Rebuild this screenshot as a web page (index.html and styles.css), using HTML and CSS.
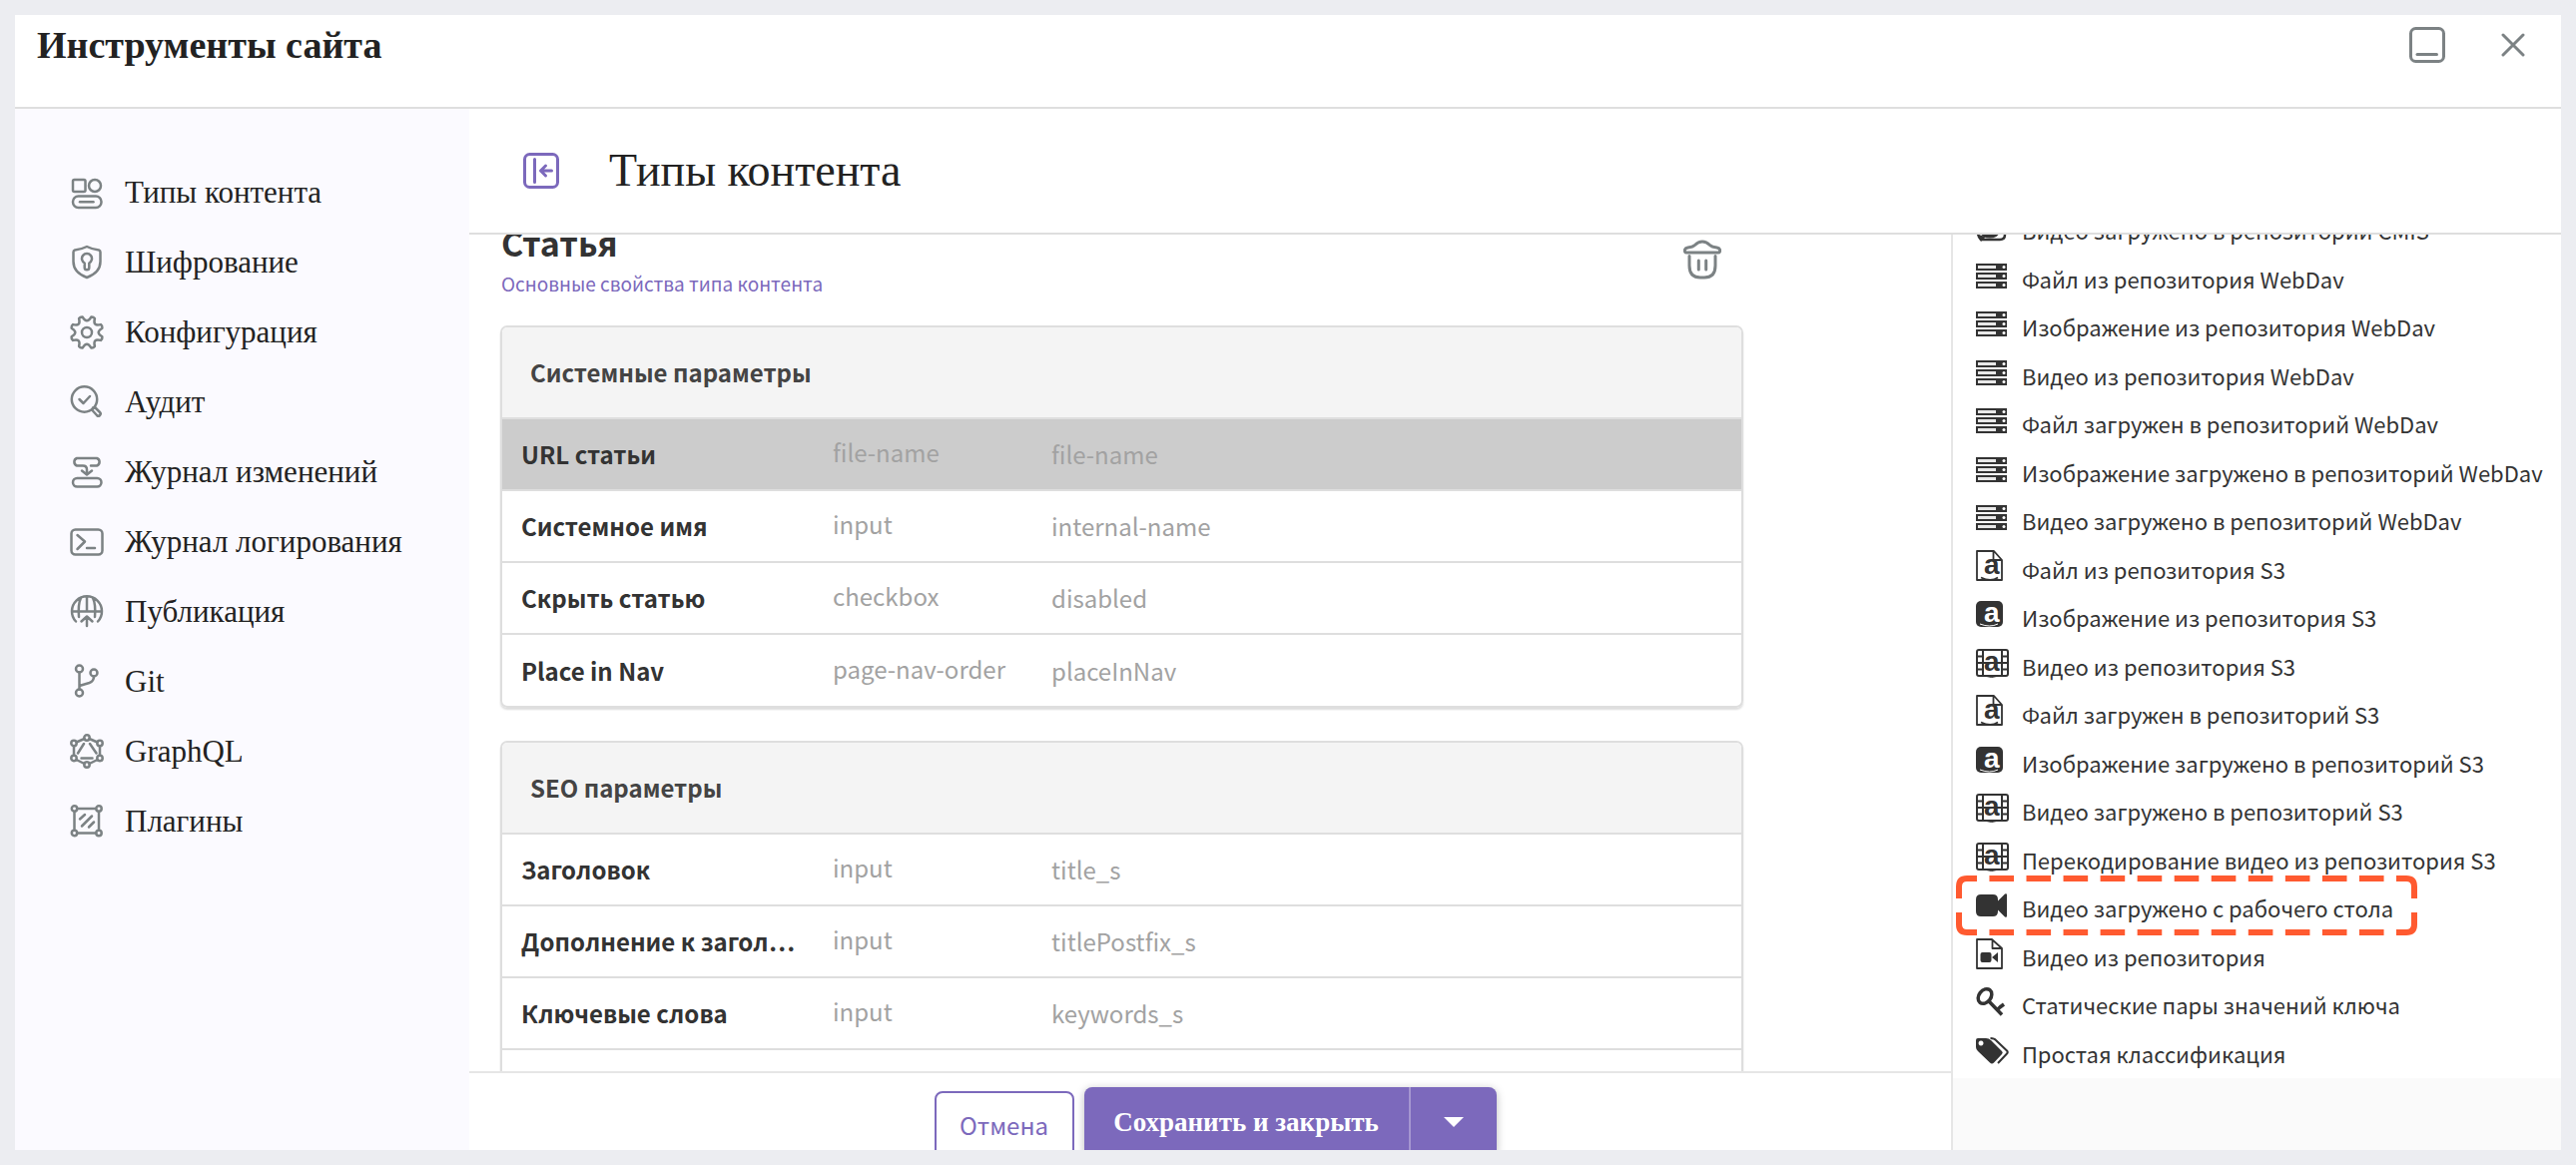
FILE: index.html
```html
<!DOCTYPE html>
<html lang="ru">
<head>
<meta charset="utf-8">
<title>Инструменты сайта</title>
<link rel="stylesheet" href="styles.css">
</head>
<body>
<svg class="sprite" aria-hidden="true">
  <symbol id="i-server" viewBox="0 0 34 32">
    <path fill="#333" d="M0 4h31v7H0zM0 13h31v7H0zM0 22h31v7H0z"/>
    <path fill="#e8e8e8" d="M2 6h18v3H2zM2 15h18v3H2zM2 24h18v3H2z"/>
    <circle fill="#fff" cx="28" cy="7.500" r="1.500"/><circle fill="#fff" cx="28" cy="16.500" r="1.500"/><circle fill="#fff" cx="28" cy="25.500" r="1.500"/>
  </symbol>
  <symbol id="i-cmis" viewBox="0 0 34 32">
    <path fill="none" stroke="#333" stroke-width="2.500" d="M2 8v14q0 4 3 7h19q5 0 5-5V8q0-5-5-5H7q-5 0-5 5z"/>
    <ellipse fill="#333" cx="14" cy="22" rx="9" ry="5.500"/>
    <path fill="#333" d="M2 24l3 7 5-5z"/>
  </symbol>
  <symbol id="i-file-a" viewBox="0 0 34 32">
    <path fill="none" stroke="#333" stroke-width="1.800" stroke-linejoin="round" d="M1 1h17l8 9v20H1zM17.500 1v9H26M5 27.500q10 5 17 0"/>
    <text x="8" y="24" class="logo-a">a</text>
  </symbol>
  <symbol id="i-image-a" viewBox="0 0 34 32">
    <rect fill="#333" y="3" width="27" height="26" rx="5"/>
    <text x="8" y="24" class="logo-a logo-a-light">a</text>
    <path fill="none" stroke="#fff" d="M4 26q10 4 18 0"/>
  </symbol>
  <symbol id="i-film-a" viewBox="0 0 34 32">
    <rect fill="none" stroke="#333" stroke-width="2" x="1" y="3" width="31" height="26" rx="2"/>
    <path fill="none" stroke="#333" stroke-width="2" d="M7 3v26M26 3v26M1 9.500h6M1 16h31M1 22.500h6M26 9.500h6M26 22.500h6"/>
    <path fill="none" stroke="#333" d="M8 29q8 3 15 0"/>
    <text x="8" y="24" class="logo-a">a</text>
  </symbol>
  <symbol id="i-video" viewBox="0 0 34 32">
    <path fill="#333" d="M5 6h12q5 0 5 5v1.500l7-7q2-1 2 1v21q0 2-2 1l-7-7V23q0 5-5 5H5q-5 0-5-5V11q0-5 5-5z"/>
  </symbol>
  <symbol id="i-file-video" viewBox="0 0 34 32">
    <path fill="none" stroke="#333" stroke-width="1.800" stroke-linejoin="round" d="M1 2h15l10 9v20H1zM16.500 2v9H26"/>
    <path fill="#333" d="M6.500 15h7q2 0 2 2v6q0 2-2 2h-7q-2 0-2-2v-6q0-2 2-2zM22 15v10l-6-5z"/>
  </symbol>
  <symbol id="i-key" viewBox="0 0 34 32">
    <ellipse fill="none" stroke="#333" stroke-width="3.500" cx="9" cy="11" rx="6" ry="8" transform="rotate(38 9 11)"/>
    <path fill="none" stroke="#333" stroke-width="3.500" d="M13 16l13 13.500M21 25l4-4M24 22l4-3"/>
  </symbol>
  <symbol id="i-tags" viewBox="0 0 34 32">
    <path fill="#333" fill-rule="evenodd" d="M0 6q0-2 2-2h8q3 0 5 2l11 11q1.500 1.500 0 3l-8 8.500q-2 2-4 0L2 17q-2-2-2-4zM5 6.500a2.500 2.500 0 1 0 .1 0z"/>
    <path fill="none" stroke="#333" stroke-width="2" d="M14.500 4q4 0 6 2.500l10.500 10q1.500 1.500 0 3l-9 9.500"/>
  </symbol>
</svg>

<div class="window">
  <header class="topbar">
    <h1 class="topbar-title">Инструменты сайта</h1>
    <button class="icon-button" type="button" aria-label="Свернуть">
      <svg width="36" height="36" viewBox="0 0 36 36" class="line-icon"><rect x="1.500" y="1.500" width="33" height="33" rx="5" stroke-width="3"/><path stroke-width="3" d="M8 27.500h19.500"/></svg>
    </button>
    <button class="icon-button" type="button" aria-label="Закрыть">
      <svg width="24" height="24" viewBox="0 0 24 24" class="line-icon"><path stroke-width="3" d="M2 2l20 20M22 2L2 22"/></svg>
    </button>
  </header>

  <div class="workspace">
    <nav class="sidebar">
      <a class="nav-item" href="#types"><svg class="line-icon nav-icon" viewBox="0 0 36 36"><rect x="4" y="5" width="12.500" height="12" rx="1.500"/><circle cx="26" cy="11" r="6"/><rect x="4" y="21.500" width="28.500" height="11.500" rx="5.500"/><path d="M11 27.200h13.500"/></svg>Типы контента</a>
      <a class="nav-item" href="#encryption"><svg class="line-icon nav-icon" viewBox="0 0 36 36"><path d="M18 2q6 3 12 3.500 1.500.5 1.500 2V17q0 11-13.500 16Q4.500 28 4.500 17V7.500q0-1.500 1.500-2Q12 5 18 2z"/><path d="M15.700 18.500a5 5 0 1 1 4.600 0V23a2.300 2.300 0 0 1-4.600 0z"/></svg>Шифрование</a>
      <a class="nav-item" href="#config"><svg class="line-icon nav-icon" viewBox="0 0 36 36"><circle cx="18" cy="18" r="5"/><path d="M13.700 2.600C16.700 7.600 19.300 7.600 22.300 2.600Q24.500 2.300 25.900 4.100C24.500 9.700 26.300 11.500 31.900 10.100Q33.700 11.500 33.400 13.700C28.400 16.700 28.400 19.300 33.400 22.300Q33.700 24.500 31.900 25.900C26.300 24.500 24.500 26.300 25.900 31.900Q24.500 33.700 22.300 33.400C19.300 28.400 16.700 28.400 13.700 33.400Q11.500 33.700 10.100 31.900C11.500 26.300 9.700 24.500 4.100 25.900Q2.300 24.500 2.600 22.300C7.600 19.300 7.600 16.700 2.600 13.700Q2.300 11.500 4.100 10.100C9.700 11.500 11.500 9.700 10.100 4.100Q11.500 2.300 13.700 2.600z"/></svg>Конфигурация</a>
      <a class="nav-item" href="#audit"><svg class="line-icon nav-icon" viewBox="0 0 36 36"><circle cx="15.500" cy="15" r="12.700"/><path d="M10.500 15l4 4 6.500-7M23 25.500q1-2 3-2.500l5 5q1.500 1.500 0 3t-3 0zM24.500 24l-.5-.5"/></svg>Аудит</a>
      <a class="nav-item" href="#changes"><svg class="line-icon nav-icon" viewBox="0 0 36 36"><path d="M14 11.500H8A4 4 0 0 1 8 4h20a4 4 0 0 1 0 7.500h-6M14 11.500q4 0 4 4v4M13 16.500l5 4 5-4"/><rect x="4" y="24" width="28.500" height="8.500" rx="4.200"/></svg>Журнал изменений</a>
      <a class="nav-item" href="#logging"><svg class="line-icon nav-icon" viewBox="0 0 36 36"><rect x="2.500" y="5.500" width="31" height="25" rx="4"/><path d="M8.500 11l7.500 6.500L8.500 25M18 24h8"/></svg>Журнал логирования</a>
      <a class="nav-item" href="#publishing"><svg class="line-icon nav-icon" viewBox="0 0 36 36"><path d="M7 27.500a15 15 0 1 1 22 0M3 17.500h30M18 3v14.500M12 4Q9 10 10 23M24 4q3 6 2 19M18 32V23M12.500 27.500L18 22.500l5.500 5"/></svg>Публикация</a>
      <a class="nav-item" href="#git"><svg class="line-icon nav-icon" viewBox="0 0 36 36"><circle cx="10.500" cy="5" r="3.500"/><circle cx="25" cy="9" r="3.500"/><circle cx="10.500" cy="29" r="3.500"/><path d="M10.500 8.500v17M25 12.500q0 5-4.500 6.500l-10 3"/></svg>Git</a>
      <a class="nav-item" href="#graphql"><svg class="line-icon nav-icon" viewBox="0 0 36 36"><circle cx="18" cy="4" r="2.700"/><circle cx="18" cy="31" r="2.700"/><circle cx="5" cy="9.500" r="2.700"/><circle cx="31" cy="9.500" r="2.700"/><circle cx="5" cy="24.500" r="2.700"/><circle cx="31" cy="24.500" r="2.700"/><path d="M7.500 8.500L15.500 5M20.500 5l8 3.500M31 12.200v9.600M5 12.200v9.600M7.500 26l8 4M28.500 26l-8 4M15 10L9 19.500M21 10l6.500 9.500M12.500 24.500h11"/></svg>GraphQL</a>
      <a class="nav-item" href="#plugins"><svg class="line-icon nav-icon" viewBox="0 0 36 36"><circle cx="5.500" cy="5" r="2.700"/><circle cx="30" cy="5" r="2.700"/><circle cx="5.500" cy="29.500" r="2.700"/><circle cx="30" cy="29.500" r="2.700"/><path d="M8.500 5h18.500M8.500 29.500h18.500M5.500 8v18.500M30 8v18.500M11 15.500L16 11M13 22.500L23 12.500M20 23.500l5-5"/></svg>Плагины</a>
    </nav>

    <main class="main">
      <header class="main-header">
        <button class="icon-button" type="button" aria-label="Скрыть меню">
          <svg width="36" height="36" viewBox="0 0 36 36" class="line-icon accent-icon"><rect x="1.500" y="1.500" width="33" height="33" rx="5" stroke-width="3"/><path stroke-width="3" d="M11.500 6.500v23M17.500 18h11M22.500 13l-5 5 5 5"/></svg>
        </button>
        <h2 class="main-title">Типы контента</h2>
      </header>

      <div class="main-body">
        <div class="editor">
          <div class="form-area">
            <div class="type-head">
              <div>
                <h3 class="type-name">Статья</h3>
                <a class="type-link" href="#properties">Основные свойства типа контента</a>
              </div>
              <button class="icon-button" type="button" aria-label="Удалить">
                <svg width="38" height="40" viewBox="0 0 38 40" class="line-icon"><path stroke-width="3" d="M3 13q-2 0-1.500-3 .5-1.500 3-2 5-.5 7-2.500Q15 2 19 2t7.500 3.500q2 2 7 2.500 2.500.5 3 2 .5 3-1.500 3zM6 16.500V26q0 12 11 12h4q11 0 11-12v-9.500M15.300 21v9M22.700 21v9"/></svg>
              </button>
            </div>

            <section class="card">
              <h4 class="card-title">Системные параметры</h4>
              <table class="fields">
                <tr class="selected"><th scope="row">URL статьи</th><td class="kind">file-name</td><td>file-name</td></tr>
                <tr><th scope="row">Системное имя</th><td class="kind">input</td><td>internal-name</td></tr>
                <tr><th scope="row">Скрыть статью</th><td class="kind">checkbox</td><td>disabled</td></tr>
                <tr><th scope="row">Place in Nav</th><td class="kind">page-nav-order</td><td>placeInNav</td></tr>
              </table>
            </section>

            <section class="card">
              <h4 class="card-title">SEO параметры</h4>
              <table class="fields">
                <tr><th scope="row">Заголовок</th><td class="kind">input</td><td>title_s</td></tr>
                <tr><th scope="row">Дополнение к загол…</th><td class="kind">input</td><td>titlePostfix_s</td></tr>
                <tr><th scope="row">Ключевые слова</th><td class="kind">input</td><td>keywords_s</td></tr>
                <tr><th scope="row"></th><td class="kind"></td><td></td></tr>
              </table>
            </section>
          </div>

          <footer class="actions">
            <button class="cancel" type="button">Отмена</button>
            <div class="save-group">
              <button class="save" type="button">Сохранить и закрыть</button>
              <button class="save-more" type="button" aria-label="Другие варианты"><svg width="20" height="10" viewBox="0 0 20 10"><path fill="#fff" d="M0 0h20L10 10z"/></svg></button>
            </div>
          </footer>
        </div>

        <aside class="palette">
          <ul class="sources">
            <li><svg class="source-icon"><use href="#i-cmis"/></svg>Видео загружено в репозиторий CMIS</li>
            <li><svg class="source-icon"><use href="#i-server"/></svg>Файл из репозитория WebDav</li>
            <li><svg class="source-icon"><use href="#i-server"/></svg>Изображение из репозитория WebDav</li>
            <li><svg class="source-icon"><use href="#i-server"/></svg>Видео из репозитория WebDav</li>
            <li><svg class="source-icon"><use href="#i-server"/></svg>Файл загружен в репозиторий WebDav</li>
            <li><svg class="source-icon"><use href="#i-server"/></svg>Изображение загружено в репозиторий WebDav</li>
            <li><svg class="source-icon"><use href="#i-server"/></svg>Видео загружено в репозиторий WebDav</li>
            <li><svg class="source-icon"><use href="#i-file-a"/></svg>Файл из репозитория S3</li>
            <li><svg class="source-icon"><use href="#i-image-a"/></svg>Изображение из репозитория S3</li>
            <li><svg class="source-icon"><use href="#i-film-a"/></svg>Видео из репозитория S3</li>
            <li><svg class="source-icon"><use href="#i-file-a"/></svg>Файл загружен в репозиторий S3</li>
            <li><svg class="source-icon"><use href="#i-image-a"/></svg>Изображение загружено в репозиторий S3</li>
            <li><svg class="source-icon"><use href="#i-film-a"/></svg>Видео загружено в репозиторий S3</li>
            <li><svg class="source-icon"><use href="#i-film-a"/></svg>Перекодирование видео из репозитория S3</li>
            <li class="marked"><svg class="source-icon"><use href="#i-video"/></svg>Видео загружено с рабочего стола
              <svg class="marker" width="462" height="60" viewBox="0 0 462 60" fill="none" stroke="#ff5a30" stroke-width="6"><path d="M3 23V11q0-8 8-8h10M441 3h10q8 0 8 8v12M3 37v12q0 8 8 8h10M441 57h10q8 0 8-8V37"/><path stroke-dasharray="24.600 12.450" d="M33.450 3H441M33.450 57H441"/></svg>
            </li>
            <li><svg class="source-icon"><use href="#i-file-video"/></svg>Видео из репозитория</li>
            <li><svg class="source-icon"><use href="#i-key"/></svg>Статические пары значений ключа</li>
            <li><svg class="source-icon"><use href="#i-tags"/></svg>Простая классификация</li>
          </ul>
        </aside>
      </div>
    </main>
  </div>
</div>
</body>
</html>
```
FILE: styles.css
```css
* { box-sizing: border-box; }

body {
  margin: 0;
  height: 100vh;
  padding: 15px;
  background: #ecedf1;
  color: #222;
  font-family: "Noto Sans CJK SC", "Noto Sans", sans-serif;
}

h1, h2, h3, h4, ul { margin: 0; padding: 0; }
a { text-decoration: none; }
button { margin: 0; padding: 0; font: inherit; cursor: pointer; }

.sprite { display: none; }

.logo-a { font: bold 28px "Liberation Sans", sans-serif; fill: #333; }
.logo-a-light { fill: #fff; }

.icon-button { display: flex; border: 0; background: none; }

.line-icon {
  fill: none;
  stroke: #7c8284;
  stroke-width: 2.5;
  stroke-linecap: round;
  stroke-linejoin: round;
}
.accent-icon { stroke: #7c69bc; }

.window {
  display: flex;
  flex-direction: column;
  height: 100%;
  background: #fff;
  overflow: hidden;
}

.topbar {
  display: flex;
  align-items: center;
  gap: 56px;
  flex: none;
  height: 94px;
  padding: 0 36px 32px 22px;
  border-bottom: 2px solid #dedede;
}
.topbar-title {
  flex: 1;
  font: bold 38px/48px "Liberation Serif", serif;
}

.workspace { display: flex; flex: 1; min-height: 0; }

.sidebar {
  flex: 0 0 455px;
  padding-top: 49px;
  background: #fbfaff;
}
.nav-item {
  display: flex;
  align-items: center;
  gap: 20px;
  height: 70px;
  padding-left: 54px;
  color: #222;
  font: 31px/36px "Liberation Serif", serif;
}
.nav-icon { width: 36px; height: 36px; }

.main { display: flex; flex-direction: column; flex: 1; min-width: 0; }
.main-header {
  display: flex;
  align-items: center;
  gap: 50px;
  flex: none;
  height: 126px;
  padding-left: 54px;
  border-bottom: 2px solid #dedede;
}
.main-title { font: 46px/52px "Liberation Serif", serif; }

.main-body { display: flex; flex: 1; min-height: 0; }
.editor { display: flex; flex-direction: column; flex: 1; min-width: 0; }

.form-area {
  flex: 1;
  min-height: 0;
  padding: 0 14% 0 31px;
  overflow: hidden;
}
.type-head {
  display: flex;
  align-items: center;
  justify-content: space-between;
  margin: -12px 0 30px;
  padding: 0 22px 0 1px;
}
.type-name { color: #333; font-size: 34px; line-height: 40px; }
.type-link {
  display: block;
  margin-top: 9px;
  color: #7c69bc;
  font-size: 19px;
  line-height: 24px;
}

.card {
  margin-bottom: 33px;
  border: 2px solid #dedede;
  border-radius: 7px;
  box-shadow: 0 2px 2px #ddd;
  overflow: hidden;
}
.card-title {
  padding: 27px 28px;
  background: #f4f4f4;
  color: #444;
  font-size: 24px;
  line-height: 36px;
}

.fields { width: 100%; border-collapse: collapse; table-layout: fixed; }
.fields tr { height: 72px; border-top: 2px solid #dedede; }
.fields th, .fields td {
  padding: 0;
  color: #a2a2a2;
  font-size: 24px;
  line-height: 32px;
  font-weight: 400;
  text-align: left;
  white-space: nowrap;
}
.fields th { width: 331px; padding-left: 19px; color: #333; font-weight: 700; }
.fields .kind { width: 219px; padding-bottom: 4px; }
.fields .selected { background: #ccc; }

.actions {
  display: flex;
  justify-content: center;
  align-items: flex-start;
  gap: 10px;
  flex: none;
  height: 79px;
  padding: 14px 0 0 10px;
  border-top: 2px solid #e6e6e6;
  overflow: hidden;
}
.cancel {
  width: 140px;
  height: 66px;
  margin-top: 4px;
  border: 2px solid #7c69bc;
  border-radius: 8px;
  background: #fff;
  color: #7c69bc;
  font-size: 24px;
}
.save-group {
  display: flex;
  height: 70px;
  border-radius: 8px;
  background: #7c69bc;
  box-shadow: 0 2px 8px #bbb;
}
.save {
  width: 327px;
  border: 0;
  border-right: 2px solid #a596d0;
  background: none;
  color: #fff;
  font: bold 27px/32px "Liberation Serif", serif;
}
.save-more {
  display: flex;
  align-items: center;
  justify-content: center;
  width: 86px;
  border: 0;
  background: none;
}

.palette {
  display: flex;
  flex-direction: column;
  flex: 0 0 611px;
  padding-bottom: 72px;
  border-left: 2px solid #e6e6e6;
  background: #fafafa;
  overflow: hidden;
}
.sources {
  display: grid;
  grid-auto-rows: 1fr;
  flex: 1;
  margin-top: -28px;
  background: #fff;
  list-style: none;
}
.sources li {
  display: flex;
  align-items: center;
  gap: 12px;
  padding: 0 0 2px 23px;
  color: #333;
  font-size: 22px;
  line-height: 32px;
  white-space: nowrap;
}
.source-icon { flex: none; width: 34px; height: 32px; margin-bottom: 6px; }
.marked { position: relative; }
.marker { position: absolute; left: 3px; top: -9px; }
```
